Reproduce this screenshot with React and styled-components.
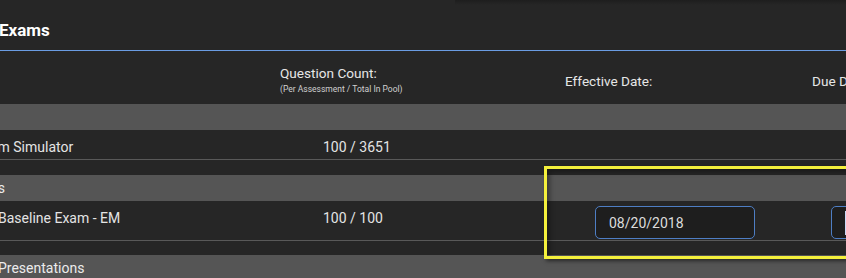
import React from 'react';
import styled, {createGlobalStyle} from 'styled-components';

const GlobalStyle = createGlobalStyle`
    html, body {
        margin: 0;
        padding: 0;
        background: #262626;
        overflow: hidden;
    }
    body {
        font-family: Roboto, "Liberation Sans", sans-serif;
        color: #e2e2e2;
    }
`;

const Page = styled.div`
    position: relative;
    width: 846px;
    height: 278px;
    overflow: hidden;
    background: #262626;
`;
const TopShade = styled.div`
    position: absolute;
    top: 0;
    left: 455px;
    right: 0;
    height: 5px;
    background: linear-gradient(rgba(0, 0, 0, 0.22), rgba(0, 0, 0, 0));
`;
const Sheet = styled.div`
    margin-left: -25px;
    width: 900px;
`;
const TitleBar = styled.div`
    height: 51px;
    box-sizing: border-box;
    padding: 19px 0 0 24px;
    border-bottom: 1px solid #6a9ce2;
`;
const Title = styled.h2`
    margin: 0;
    font-size: 17px;
    line-height: 22px;
    font-weight: 700;
    color: #ffffff;
`;
const Columns = styled.div`
    display: grid;
    grid-template-columns: 305px 265px 247px 1fr;
`;
const HeaderRow = styled(Columns)`
    height: 53px;
`;
const HeadCell = styled.div`
    padding-top: ${p => p.$top || 0}px;
    padding-left: ${p => p.$indent || 0}px;
    font-size: 13.6px;
    line-height: 16px;
    color: #e6e6e6;
    white-space: nowrap;
`;
const HeadNote = styled.div`
    margin-top: 3px;
    font-size: 8.5px;
    line-height: 10px;
    color: #d0d0d0;
`;
const Group = styled.div`
    margin-bottom: ${p => p.$gap || 15}px;
`;
const Band = styled.div`
    height: 26px;
    display: flex;
    align-items: center;
    background: #555555;
    font-size: 14px;
    color: #ececec;
    white-space: nowrap;
`;
const BandLabel = styled.span`
    margin-left: ${p => p.$indent || 0}px;
`;
const Row = styled(Columns)`
    min-height: 30px;
    padding-bottom: 1px;
    box-sizing: border-box;
    border-bottom: 1px solid #595959;
`;
const Cell = styled.div`
    padding-top: ${p => p.$top || 7}px;
    padding-left: ${p => p.$indent || 0}px;
    font-size: 14px;
    line-height: 20px;
    color: #e4e4e4;
    white-space: nowrap;
`;
const DateField = styled.div`
    width: 160px;
    height: 33px;
    box-sizing: border-box;
    display: flex;
    align-items: center;
    padding-left: 13px;
    border: 1px solid #4e7ec4;
    border-radius: 5px;
    background: #1e1e1e;
    font-size: 14px;
    color: #dcdcdc;
`;
const Selection = styled.span`
    display: inline-block;
    width: 14px;
    height: 24px;
    background: #c9d8f7;
`;
const Highlight = styled.div`
    position: absolute;
    left: 544px;
    top: 166px;
    width: 320px;
    height: 93px;
    box-sizing: border-box;
    border: 3px solid #f4f03c;
    box-shadow: 2px 2px 4px rgba(0, 0, 0, 0.55), inset 3px 3px 5px rgba(0, 0, 0, 0.35);
    pointer-events: none;
`;

const groups = [
    {
        heading: '',
        indent: 0,
        rows: [{name: 'Exam Simulator', count: '100 / 3651', indent: 0}],
    },
    {
        heading: 'Exams',
        indent: -12,
        rows: [{name: 'Baseline Exam - EM', count: '100 / 100', indent: 23, effective: '08/20/2018', due: true}],
    },
];

class App extends React.Component {
    render() {
        return (
            <Page>
                <GlobalStyle />
                <TopShade />
                <Sheet>
                    <TitleBar>
                        <Title>Exams</Title>
                    </TitleBar>
                    <HeaderRow>
                        <HeadCell />
                        <HeadCell $top={14}>
                            Question Count:
                            <HeadNote>(Per Assessment / Total In Pool)</HeadNote>
                        </HeadCell>
                        <HeadCell $top={22} $indent={20}>Effective Date:</HeadCell>
                        <HeadCell $top={22} $indent={20}>Due Date:</HeadCell>
                    </HeaderRow>
                    {groups.map((group, i) => (
                        <Group key={i} $gap={i === 1 ? 14 : 15}>
                            <Band>
                                <BandLabel $indent={group.indent}>{group.heading}</BandLabel>
                            </Band>
                            {group.rows.map(row => (
                                <Row key={row.name}>
                                    <Cell $indent={row.indent}>{row.name}</Cell>
                                    <Cell $indent={43}>{row.count}</Cell>
                                    <Cell $top={5} $indent={50}>
                                        {row.effective && <DateField>{row.effective}</DateField>}
                                    </Cell>
                                    <Cell $top={5} $indent={39}>
                                        {row.due && <DateField><Selection /></DateField>}
                                    </Cell>
                                </Row>
                            ))}
                        </Group>
                    ))}
                    <Band>
                        <BandLabel $indent={23}>Presentations</BandLabel>
                    </Band>
                </Sheet>
                <Highlight />
            </Page>
        );
    }
}

export default App;
